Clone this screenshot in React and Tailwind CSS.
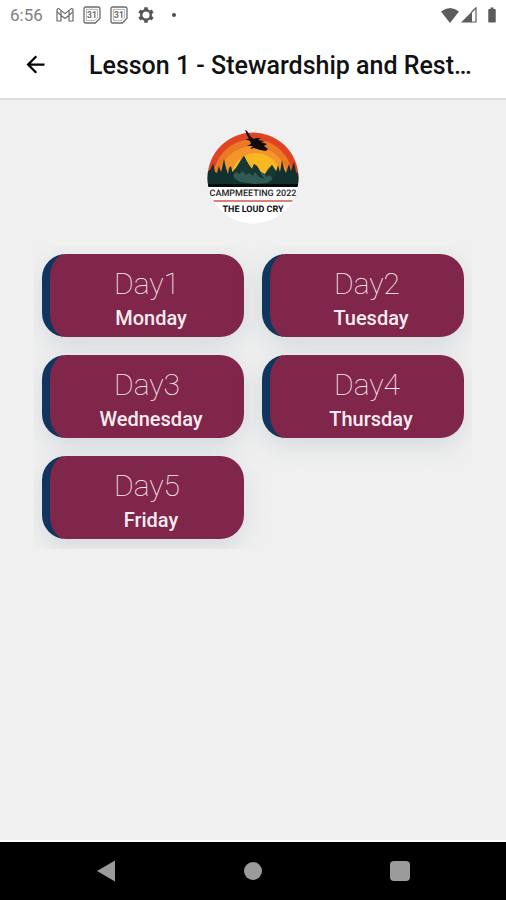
import React from 'react';
import { MdArrowBack, MdSettings, MdBatteryFull } from 'react-icons/md';

const DAYS = [
  { title: 'Day1', weekday: 'Monday' },
  { title: 'Day2', weekday: 'Tuesday' },
  { title: 'Day3', weekday: 'Wednesday' },
  { title: 'Day4', weekday: 'Thursday' },
  { title: 'Day5', weekday: 'Friday' },
];

const MailIcon = () => (
  <svg viewBox="0 0 18 16" className="h-4 w-[18px]" fill="none" stroke="currentColor" strokeWidth="1.2" strokeLinejoin="round">
    <path d="M1 3.2 Q1 1.5 2.7 1.6 L9 6.6 L15.3 1.6 Q17 1.5 17 3.2 V14 H13 V8.4 L9 11.4 L5 8.4 V14 H1 Z" />
    <path d="M5 3.6 V8.4 M13 3.6 V8.4 M1 4.6 L5 8.2 M17 4.6 L13 8.2" />
  </svg>
);

const CalendarIcon = () => (
  <svg viewBox="0 0 18 18" className="h-[18px] w-[18px]" fill="none" stroke="currentColor" strokeWidth="1.3">
    <path d="M2.8 1 H15.2 Q17 1 17 2.8 V12.2 L12.4 17 H2.8 Q1 17 1 15.2 V2.8 Q1 1 2.8 1 Z" />
    <path d="M14.6 3.4 H3.4 V14.6 H11.6 L14.6 11.6 Z" strokeWidth="0.5" />
    <text x="9" y="12" textAnchor="middle" fontSize="8.5" fontWeight="700" fontFamily="Roboto, sans-serif" fill="currentColor" stroke="none">
      31
    </text>
  </svg>
);

const SettingsIcon = () => (
  <svg viewBox="0 0 18 18" className="h-[18px] w-[18px]" fill="none" stroke="currentColor">
    <circle cx="9" cy="9" r="4.8" strokeWidth="2.4" />
    <path
      d="M9 1.2 V4 M9 14 V16.800 M2.300 5.100 L4.700 6.500 M13.300 11.500 L15.700 12.900 M2.300 12.900 L4.700 11.500 M13.300 6.500 L15.700 5.100"
      strokeWidth="3.6"
    />
  </svg>
);

const StatusBar = () => (
  <div className="flex h-[30px] items-center justify-between pl-[10px] pr-[5px] text-[#6b6b6b]">
    <div className="flex items-center gap-[9px]">
      <span className="mr-1 text-[17px] leading-none text-[#808080]">6:56</span>
      <MailIcon />
      <CalendarIcon />
      <CalendarIcon />
      <span className="text-[#555555]">
        <SettingsIcon />
      </span>
      <span className="ml-2 h-1 w-1 rounded-full bg-[#505050]" />
    </div>
    <div className="flex items-center gap-[2px] text-[#5c5c5c]">
      <svg viewBox="0 0 18 15" className="h-[15px] w-[18px]" fill="currentColor">
        <path d="M9 15 L0 3.6 Q9 -3.6 18 3.6 Z" />
      </svg>
      <svg viewBox="0 0 16 16" className="h-4 w-4" fill="currentColor">
        <path d="M0 15.5 L11 4.5 V15.5 Z" />
        <path d="M10.5 5.2 L15 0.8 V15 H10.5" fill="none" stroke="currentColor" strokeWidth="1.2" />
      </svg>
      <MdBatteryFull className="ml-1 h-[18px] w-[18px]" />
    </div>
  </div>
);

const Logo = () => (
  <svg viewBox="0 0 92 94" className="h-[94px] w-[92px]" role="img" aria-label="Campmeeting 2022">
    <defs>
      <clipPath id="disc">
        <circle cx="46" cy="48" r="45.5" />
      </clipPath>
    </defs>
    <circle cx="46" cy="48" r="45.5" fill="#fff" />
    <g clipPath="url(#disc)">
      <rect width="92" height="56" fill="#df4424" />
      <circle cx="46" cy="49" r="40" fill="#ec7a25" />
      <circle cx="46" cy="51" r="35" fill="#f3952a" />
      <circle cx="49" cy="48" r="25" fill="#fab722" />
      {/* mountains */}
      <path d="M14 56 L18 47 L23 44 L29 38 L32 33 L35 28 L37 26 L40 32 L42 35 L45 39 L47 34 L50 36 L54 42 L58 44 L61 39 L65 35 L69 41 L74 49 L80 56 Z" fill="#2f5b54" />
      <path d="M37 26 L42 35 L45 39 L47 34 L50 36 L57 49 L52 47 L48 42 L46 46 L42 43 L39 45 L36 41 L32 44 L29 42 L24 48 L21 48 L29 38 Z M65 35 L69 41 L75 52 L69 48 L66 50 L63 45 L59 47 L58 44 Z" fill="#173832" />
      {/* tree line */}
      <path d="M0 56 V42 L3 40 L5 36 L6 33 L8 42 L10 43 L12 36 L14 42 L15 38 L17 29 L19 38 L21 44 L22 38 L24 36 L26 45 L28 49 L33 52 L48 54 L60 53 L65 50 L67 46 L69 42 L71 35 L73 42 L75 30 L77 39 L79 43 L82 34 L84 41 L87 32 L89 42 L92 44 V56 Z" fill="#12302e" />
      <rect y="54" width="92" height="3" fill="#050b0b" />
      <rect y="57" width="92" height="40" fill="#fff" />
      <path d="M5 71 H87" stroke="#df7e76" strokeWidth="2" />
    </g>
    <path d="M38 0 L40 1 L42 4 L44 7 L47 9 L49 8 L54 8 L51 10 L58 11 L54 12 L60 14 L57 16 L61 19 L59 21 L53 20 L47 18 L43 19 L46 16 L40 16 L44 14 L43 11 L38 9 L42 9 L40 5 Z" fill="#100b08" />
    <text x="46" y="66" textAnchor="middle" fontSize="9" fontWeight="500" fontFamily="Roboto, sans-serif" fill="#222" textRendering="geometricPrecision">
      CAMPMEETING 2022
    </text>
    <text x="46" y="82" textAnchor="middle" fontSize="9" fontWeight="700" fontFamily="Roboto, sans-serif" fill="#111" textRendering="geometricPrecision">
      THE LOUD CRY
    </text>
  </svg>
);

const Header = () => (
  <header className="flex h-[70px] items-center border-b-2 border-[#dedede] pl-[22px] pr-5">
    <button type="button" aria-label="Back" className="shrink-0 text-black">
      <MdArrowBack className="h-[27px] w-[27px]" />
    </button>
    <h1 className="ml-10 truncate pt-1 text-[25px] font-medium leading-8 text-[#111]">
      Lesson 1 - Stewardship and Rest…
    </h1>
  </header>
);

const DayCard = ({ title, weekday }) => (
  <button
    type="button"
    className="flex h-[83px] flex-col items-center justify-center rounded-3xl border-l-8 border-[#12355f] bg-[#80264a] pt-2 shadow-[0_8px_24px_rgba(149,165,175,0.3)]"
  >
    <span className="text-[30px] font-thin leading-9 text-[#fff0f5]">{title}</span>
    <span className="pl-2 text-[20px] font-medium leading-8 text-[#f8ecf0]">{weekday}</span>
  </button>
);

const NavBar = () => (
  <nav className="flex h-[58px] items-center justify-between bg-black px-24 text-[#9b9b9b]">
    <button type="button" aria-label="Back">
      <svg viewBox="0 0 20 22" className="h-[22px] w-5" fill="currentColor">
        <path d="M1 11 L19 0.500 V21.500 Z" />
      </svg>
    </button>
    <button type="button" aria-label="Home" className="h-[18px] w-[18px] rounded-full bg-[#9b9b9b]" />
    <button type="button" aria-label="Recent apps" className="h-5 w-5 rounded-sm bg-[#9b9b9b]" />
  </nav>
);

const App = () => {
  return (
    <div className="flex min-h-screen flex-col bg-white font-['Roboto',sans-serif]">
      <StatusBar />
      <Header />
      <main className="flex flex-1 flex-col items-center border-b-2 border-white bg-[#f0f0f0] px-[34px] pt-[30px]">
        <Logo />
        <div className="mt-[22px] grid w-full grid-cols-2 gap-[18px] overflow-hidden px-2 pb-[10px] pt-2">
          {DAYS.map((day) => (
            <DayCard key={day.title} title={day.title} weekday={day.weekday} />
          ))}
        </div>
      </main>
      <NavBar />
    </div>
  );
};

export default App;
